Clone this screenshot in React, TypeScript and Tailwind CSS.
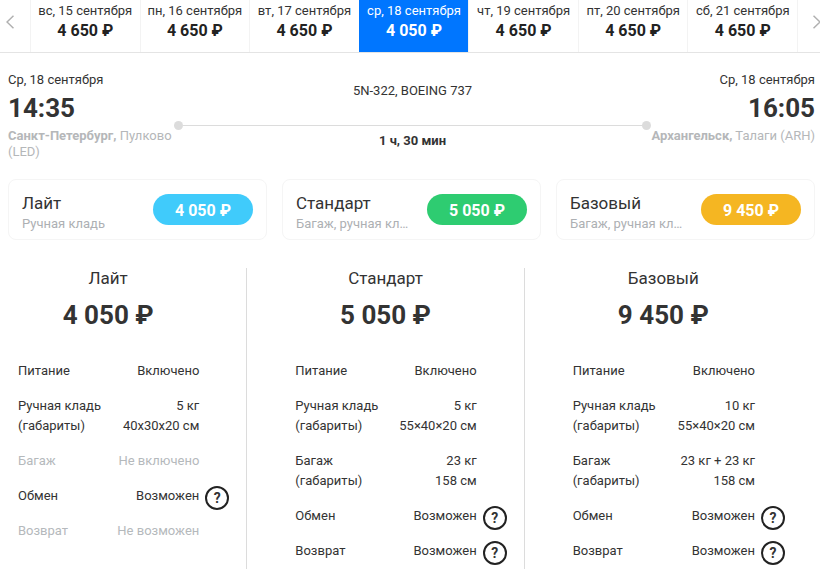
import React from "react";

const days = [
  { date: "вс, 15 сентября", price: "4 650 ₽" },
  { date: "пн, 16 сентября", price: "4 650 ₽" },
  { date: "вт, 17 сентября", price: "4 650 ₽" },
  { date: "ср, 18 сентября", price: "4 050 ₽", active: true },
  { date: "чт, 19 сентября", price: "4 650 ₽" },
  { date: "пт, 20 сентября", price: "4 650 ₽" },
  { date: "сб, 21 сентября", price: "4 650 ₽" },
];

type Row = { label: string[]; value: string[]; off?: boolean; help?: boolean };
type Fare = { name: string; note: string; price: string; color: string; rows: Row[] };

const fares: Fare[] = [
  {
    name: "Лайт",
    note: "Ручная кладь",
    price: "4 050 ₽",
    color: "bg-[#40cbfb]",
    rows: [
      { label: ["Питание"], value: ["Включено"] },
      { label: ["Ручная кладь", "(габариты)"], value: ["5 кг", "40x30x20 см"] },
      { label: ["Багаж"], value: ["Не включено"], off: true },
      { label: ["Обмен"], value: ["Возможен"], help: true },
      { label: ["Возврат"], value: ["Не возможен"], off: true },
    ],
  },
  {
    name: "Стандарт",
    note: "Багаж, ручная кл…",
    price: "5 050 ₽",
    color: "bg-[#2ecc71]",
    rows: [
      { label: ["Питание"], value: ["Включено"] },
      { label: ["Ручная кладь", "(габариты)"], value: ["5 кг", "55×40×20 см"] },
      { label: ["Багаж", "(габариты)"], value: ["23 кг", "158 см"] },
      { label: ["Обмен"], value: ["Возможен"], help: true },
      { label: ["Возврат"], value: ["Возможен"], help: true },
    ],
  },
  {
    name: "Базовый",
    note: "Багаж, ручная кл…",
    price: "9 450 ₽",
    color: "bg-[#f5b622]",
    rows: [
      { label: ["Питание"], value: ["Включено"] },
      { label: ["Ручная кладь", "(габариты)"], value: ["10 кг", "55×40×20 см"] },
      { label: ["Багаж", "(габариты)"], value: ["23 кг + 23 кг", "158 см"] },
      { label: ["Обмен"], value: ["Возможен"], help: true },
      { label: ["Возврат"], value: ["Возможен"], help: true },
    ],
  },
];

function Arrow({ d }: { d: string }) {
  return (
    <svg width="8" height="14" viewBox="0 0 8 14" fill="none" stroke="#b0b0b0" strokeWidth="1.5" className="shrink-0" aria-hidden="true">
      <path d={d} />
    </svg>
  );
}

function DateStrip() {
  return (
    <nav className="flex h-[53px] overflow-hidden border-b border-[#e4e4e4]">
      <button type="button" aria-label="Раньше" className="flex w-[30px] shrink-0 items-start pt-[15px] pl-[6px]">
        <Arrow d="M7.5 0.7 1 7l6.500 6.300" />
      </button>
      {days.map((day) => (
        <button
          key={day.date}
          type="button"
          className={
            "min-w-0 flex-1 border-l pt-px text-center whitespace-nowrap " +
            (day.active ? "border-[#0076ff] bg-[#0076ff] text-white" : "border-[#f3f3f3]")
          }
        >
          <span className="block text-[13px] leading-5">{day.date}</span>
          <span className={"block h-[31px] text-base leading-5 font-bold " + (day.active ? "" : "text-[#222]")}>
            {day.price}
          </span>
        </button>
      ))}
      <button type="button" aria-label="Позже" className="flex w-[23px] shrink-0 items-start border-l border-[#f3f3f3] pt-[15px] pl-[15px]">
        <Arrow d="M0.500 0.700 7 7l-6.500 6.300" />
      </button>
    </nav>
  );
}

function Flight() {
  return (
    <section className="flex h-[126px] pt-[19px] pr-[5px] pl-2">
      <div className="w-[170px] shrink-0 text-[13px] leading-4">
        <p>Ср, 18 сентября</p>
        <p className="py-1 text-[26px] leading-8 font-bold">14:35</p>
        <p className="text-[#b5b7b9]">
          <b>Санкт-Петербург,</b> Пулково (LED)
        </p>
      </div>
      <div className="-mx-1 min-w-0 flex-1 pt-[9px] text-center text-[13px] leading-5">
        <p>5N-322, BOEING 737</p>
        <div className="flex items-center pt-5">
          <span className="size-[9px] rounded-full bg-[#dcdcdc]" />
          <span className="h-px flex-1 bg-[#dcdcdc]" />
          <span className="size-[9px] rounded-full bg-[#dcdcdc]" />
        </div>
        <p className="pt-px font-bold">1 ч, 30 мин</p>
      </div>
      <div className="w-[168px] shrink-0 text-right text-[13px] leading-4">
        <p>Ср, 18 сентября</p>
        <p className="py-1 text-[26px] leading-8 font-bold">16:05</p>
        <p className="whitespace-nowrap text-[#b5b7b9]">
          <b>Архангельск,</b> Талаги (ARH)
        </p>
      </div>
    </section>
  );
}

function FareCards() {
  return (
    <section className="grid grid-cols-3 gap-[15px] pr-[5px] pl-2">
      {fares.map((fare) => (
        <div key={fare.name} className="flex h-[61px] items-center gap-3 rounded-lg border border-[#f5f5f5] px-[13px]">
          <div className="min-w-0 flex-1 pt-[6px]">
            <h2 className="text-[17px] leading-[22px]">{fare.name}</h2>
            <p className="truncate text-[13px] leading-5 text-[#adb0b3]">{fare.note}</p>
          </div>
          <button type="button" className={"h-[31px] w-[100px] shrink-0 rounded-full pt-[3px] text-base font-bold text-white " + fare.color}>
            {fare.price}
          </button>
        </div>
      ))}
    </section>
  );
}

function Comparison() {
  return (
    <section className="mt-7 mr-[18px] -ml-[30px] grid grid-cols-3 divide-x divide-[#dcdcdc]">
      {fares.map((fare) => (
        <article key={fare.name} className="h-[301px]">
          <h3 className="text-center text-[17px] leading-[21px]">{fare.name}</h3>
          <p className="pt-[10px] text-center text-[26px] leading-8 font-bold">{fare.price}</p>
          <div className="pt-[30px] pr-[17px] pl-12">
            <table className="w-full text-[13px] leading-5">
              <tbody>
                {fare.rows.map((row) => (
                  <tr key={row.label[0]} className={"align-top " + (row.off ? "text-[#b5b9bc]" : "")}>
                    <th scope="row" className="p-0 pb-[15px] text-left font-normal whitespace-nowrap">
                      {row.label.map((line) => (
                        <span key={line} className="block">{line}</span>
                      ))}
                    </th>
                    <td className="p-0 text-right whitespace-nowrap">
                      {row.value.map((line) => (
                        <span key={line} className="block">{line}</span>
                      ))}
                    </td>
                    <td className="w-[30px] p-0">
                      {row.help && (
                        <button
                          type="button"
                          aria-label={row.label[0] + ": условия"}
                          className="ml-auto flex size-6 items-center justify-center rounded-full border-2 border-[#222]"
                        >
                          <span className="text-sm font-bold">?</span>
                        </button>
                      )}
                    </td>
                  </tr>
                ))}
              </tbody>
            </table>
          </div>
        </article>
      ))}
    </section>
  );
}

export default function App() {
  return (
    <main className="overflow-hidden bg-white font-['Roboto','Liberation_Sans',sans-serif] text-[#333]">
      <DateStrip />
      <Flight />
      <FareCards />
      <Comparison />
    </main>
  );
}
